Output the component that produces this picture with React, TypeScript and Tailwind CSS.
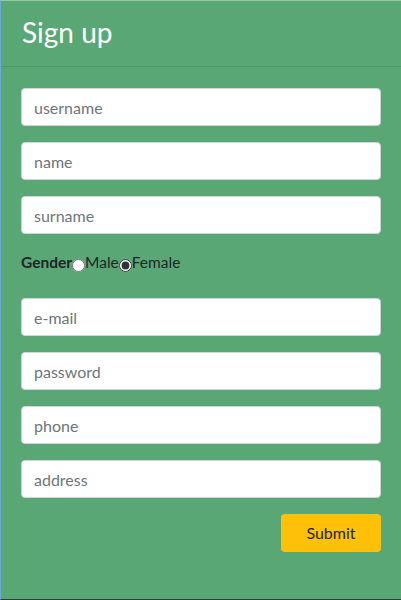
import React, { useState } from 'react';

const fields = ['username', 'name', 'surname'];
const fields2 = ['e-mail', 'password', 'phone', 'address'];

const Field: React.FC<{ placeholder: string }> = ({ placeholder }) => (
    <input
        type="text"
        placeholder={placeholder}
        className="block w-full h-[38px] px-3 bg-white rounded-[4px] border border-[#ced4da] text-[16px] text-[#495057] placeholder:text-[#6c757d] focus:outline-none"
    />
);

export default function App() {
    const [gender, setGender] = useState('female');

    return (
        <div className="w-[401px] h-[600px] bg-[#5aa776] border-l border-l-[#6aa9d8] border-t border-t-[#9cc6a8] border-b border-b-[#2f3f36] flex flex-col" style={{ fontFamily: 'Lato, "Noto Sans", sans-serif' }}>
            <div className="h-[66px] border-b border-[#4b9566] px-[21px] flex items-center">
                <h1 className="text-[28px] text-white leading-none -mt-1">Sign up</h1>
            </div>
            <form className="px-[20px] pt-[21px] flex flex-col" onSubmit={(e) => e.preventDefault()}>
                <div className="flex flex-col gap-4">
                    {fields.map((f) => <Field key={f} placeholder={f} />)}
                </div>
                <div className="flex items-center h-[26px] mt-[16px] mb-[22px] text-[15.5px] text-[#212529]">
                    <span className="font-bold">Gender</span>
                    <input type="radio" name="gender" checked={gender === 'male'} onChange={() => setGender('male')} className="w-[13px] h-[13px] mt-[5px] mx-0 accent-[#333]" />
                    <span>Male</span>
                    <input type="radio" name="gender" checked={gender === 'female'} onChange={() => setGender('female')} className="w-[13px] h-[13px] mt-[5px] mx-0 accent-[#333]" />
                    <span>Female</span>
                </div>
                <div className="flex flex-col gap-4">
                    {fields2.map((f) => <Field key={f} placeholder={f} />)}
                </div>
                <div className="flex justify-end mt-4">
                    <button type="submit" className="w-[100px] h-[38px] bg-[#ffc107] rounded-[4px] text-[16px] text-[#212529]">Submit</button>
                </div>
            </form>
        </div>
    );
}
